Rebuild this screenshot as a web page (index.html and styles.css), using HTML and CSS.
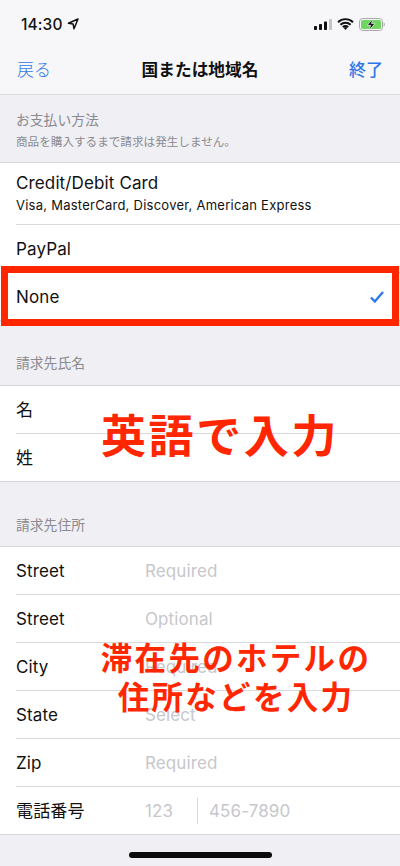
FILE: index.html
```html
<!DOCTYPE html>
<html lang="ja">
<head>
<meta charset="utf-8">
<title>国または地域名</title>
<link rel="stylesheet" href="styles.css">
</head>
<body>
<div class="phone">
  <header class="top">
    <div class="status">
      <div class="status-left">
        <span class="time">14:30</span>
        <svg class="loc" width="12" height="12" viewBox="0 0 12 12"><path d="M11 1 1.4 5.3l4.7.6.9 4.9z" fill="none" stroke="#111" stroke-width="1.5" stroke-linejoin="round"/></svg>
      </div>
      <div class="status-right">
        <svg width="18" height="12" viewBox="0 0 18 12"><rect x="0" y="8" width="3" height="4" rx=".7" fill="#111"/><rect x="5" y="6" width="3" height="6" rx=".7" fill="#111"/><rect x="10" y="3.5" width="3" height="8.5" rx=".7" fill="#111"/><rect x="15" y="1" width="3" height="11" rx=".7" fill="#c4c4c6"/></svg>
        <svg width="17" height="12" viewBox="0 0 17 12"><path d="M1 4.2a10.8 10.8 0 0 1 15 0M3.4 6.8a7.3 7.3 0 0 1 10.2 0M5.8 9.1a3.8 3.8 0 0 1 5.4 0" fill="none" stroke="#111" stroke-width="1.9"/><path d="m8.5 12-2-2.2a3 3 0 0 1 4 0z" fill="#111"/></svg>
        <svg width="26" height="13" viewBox="0 0 26 13"><rect x=".5" y=".5" width="23" height="12" rx="3.2" fill="none" stroke="#a9a9a9"/><rect x="2" y="2" width="20" height="9" rx="1.8" fill="#6fd65f"/><path d="M24.6 4.5c.9.3 1.2 1 1.2 2s-.3 1.7-1.2 2z" fill="#a9a9a9"/><path d="M13.8.8 8.2 7.3h3.4l-1.4 4.9 5.7-6.6h-3.4z" fill="#111" stroke="#f6f6f9" stroke-width=".7"/></svg>
      </div>
    </div>
    <nav class="nav">
      <span class="nav-link nav-back">戻る</span>
      <span class="nav-title">国または地域名</span>
      <span class="nav-link nav-done">終了</span>
    </nav>
  </header>

  <section class="head head-pay">
    <p class="head-title">お支払い方法</p>
    <p class="head-sub">商品を購入するまで請求は発生しません。</p>
  </section>
  <div class="group">
    <div class="row row-card">
      <div class="row-inner card-inner">
        <span class="label">Credit/Debit Card</span>
        <span class="sub">Visa, MasterCard, Discover, American Express</span>
      </div>
    </div>
    <div class="row"><div class="row-inner"><span class="label">PayPal</span></div></div>
    <div class="row"><div class="row-inner row-check"><span class="label">None</span>
      <svg width="14" height="12" viewBox="0 0 14 12"><path d="m1 6.5 3.8 4L13 1" fill="none" stroke="#2f77e8" stroke-width="2.4"/></svg>
    </div></div>
  </div>

  <section class="head head-name"><p class="head-title">請求先氏名</p></section>
  <div class="group">
    <div class="row"><div class="row-inner"><span class="label">名</span></div></div>
    <div class="row"><div class="row-inner"><span class="label">姓</span></div></div>
  </div>

  <section class="head head-addr"><p class="head-title">請求先住所</p></section>
  <div class="group">
    <div class="row"><div class="row-inner"><span class="label field">Street</span><span class="ph">Required</span></div></div>
    <div class="row"><div class="row-inner"><span class="label field">Street</span><span class="ph">Optional</span></div></div>
    <div class="row"><div class="row-inner"><span class="label field">City</span><span class="ph">Required</span></div></div>
    <div class="row"><div class="row-inner"><span class="label field">State</span><span class="ph">Select</span></div></div>
    <div class="row"><div class="row-inner"><span class="label field">Zip</span><span class="ph">Required</span></div></div>
    <div class="row"><div class="row-inner"><span class="label field">電話番号</span><span class="ph area">123</span><span class="ph phone-no">456-7890</span></div></div>
  </div>
  <div class="home-wrap"><div class="home"></div></div>

  <div class="red-box"></div>
  <div class="note note-name">英語で入力</div>
  <div class="note note-addr"><span>滞在先のホテルの</span><span>住所などを入力</span></div>
</div>
</body>
</html>
```
FILE: styles.css
```css
* { box-sizing: border-box; }
html, body { margin: 0; padding: 0; }
body { background: #efeff4; font-family: Inter, "Noto Sans CJK JP", sans-serif; color: #111; }
p { margin: 0; }
.phone { position: relative; width: 400px; height: 866px; overflow: hidden; background: #efeff4; }

.top { height: 95px; background: #f7f7f9; border-bottom: 1px solid #d9d9de; }
.status { height: 44px; padding: 4px 15px 0 21px; display: flex; justify-content: space-between; align-items: center; }
.status-left { display: flex; align-items: center; gap: 4px; }
.time { font-size: 15.5px; font-weight: 500; letter-spacing: 0.1px; }
.status-right { display: flex; align-items: center; gap: 5px; }
.nav { height: 49px; padding: 0 17px; display: flex; justify-content: space-between; align-items: center; }
.nav-link { color: #2f77e8; font-size: 17px; font-family: "Noto Sans CJK JP", sans-serif; }
.nav-back { font-weight: 300; }
.nav-done { font-weight: 500; }
.nav-title { font-size: 16.7px; font-weight: 700; font-family: "Noto Sans CJK JP", sans-serif; }

.head { color: #8a8a8f; font-family: "Noto Sans CJK JP", sans-serif; padding-left: 16px; }
.head-pay { height: 67px; padding-top: 14px; }
.head-name { height: 64px; padding-top: 31px; }
.head-addr { height: 64px; padding-top: 32px; }
.head-title { font-size: 13.8px; line-height: 20px; }
.head-sub { font-size: 11.6px; line-height: 24px; }

.group { background: #fff; border-top: 1px solid #d5d5da; border-bottom: 1px solid #d5d5da; }
.row { padding-left: 16px; height: 48px; }
.row:last-child { height: 47px; }
.row-card { height: 62px; }
.row-inner { height: 100%; display: flex; align-items: center; border-bottom: 1px solid #d9d9dc; }
.row:last-child .row-inner { border-bottom: 0; }
.card-inner { flex-direction: column; align-items: flex-start; justify-content: center; gap: 3px; padding-bottom: 2px; }
.row-check { justify-content: space-between; padding-right: 16px; }
.label { font-size: 17px; line-height: 22px; letter-spacing: 0.13px; font-family: Inter, "Noto Sans CJK JP", sans-serif; }
.sub { font-size: 13px; line-height: 16px; letter-spacing: 0.25px; }
.field { width: 129px; }
.ph { font-size: 17px; letter-spacing: 0.1px; color: #c7c7cc; }
.area { width: 52px; }
.phone-no { border-left: 1px solid #d9d9dc; padding-left: 11px; line-height: 26px; }

.home-wrap { padding-top: 17px; display: flex; justify-content: center; }
.home { width: 143px; height: 6px; border-radius: 3px; background: #0b0b0b; }

.red-box { position: absolute; left: 1px; top: 266px; width: 398px; height: 60px; border: 7px solid #ff2600; }
.note { position: absolute; color: #ff2600; font-family: "Noto Sans CJK JP", sans-serif; font-weight: 700; white-space: nowrap; }
.note-name { left: 101px; top: 402px; font-size: 45px; line-height: 64px; letter-spacing: 2.6px; }
.note-addr { left: 100px; top: 637px; width: 272px; display: flex; flex-direction: column; align-items: center; font-size: 31.5px; line-height: 39px; letter-spacing: 2.3px; }
```
